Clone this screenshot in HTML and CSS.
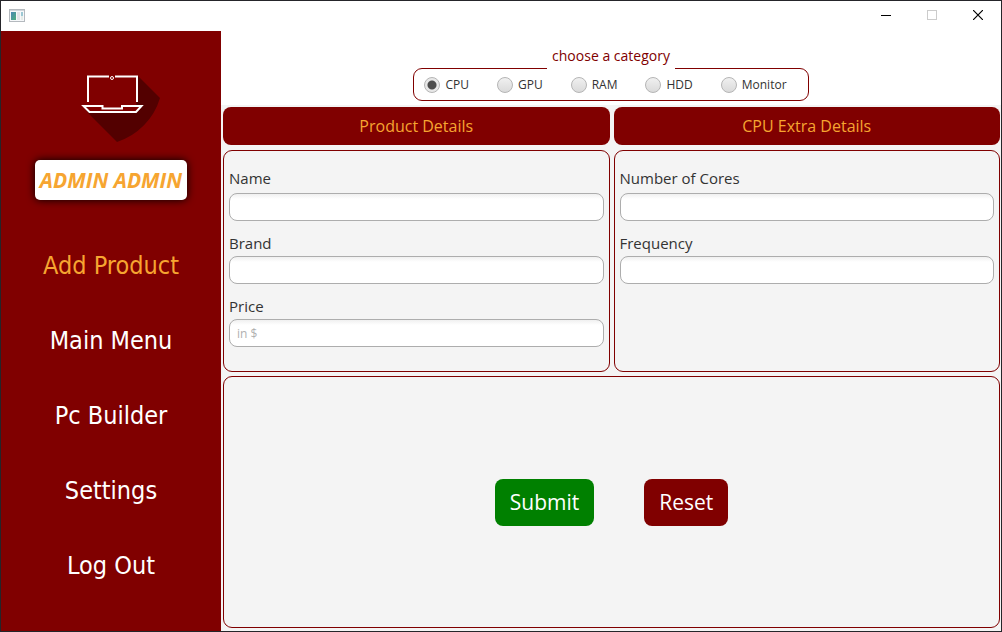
FILE: index.html
```html
<!DOCTYPE html>
<html lang="en">
<head>
<meta charset="utf-8">
<title>Add Product</title>
<link rel="stylesheet" href="styles.css">
</head>
<body>
<div class="window">
  <header class="titlebar">
    <svg class="app-icon" width="16" height="14" viewBox="0 0 16 14" aria-hidden="true">
      <defs>
        <linearGradient id="pane" x1="0" y1="0" x2="1" y2="1">
          <stop offset="0" stop-color="#4a86b4"/>
          <stop offset="1" stop-color="#4fae7c"/>
        </linearGradient>
      </defs>
      <rect x="0.5" y="0.5" width="15" height="12" fill="#f6f8fa" stroke="#b4b9be"/>
      <rect x="1" y="1" width="14" height="1" fill="#cfd5da"/>
      <rect x="2" y="3" width="5" height="8" fill="url(#pane)"/>
      <rect x="8" y="3" width="3" height="8" fill="#e2e4e8"/>
      <rect x="12" y="3" width="2" height="4" fill="#9cc8d4"/>
      <rect x="12" y="7" width="2" height="4" fill="#e6ece8"/>
    </svg>
    <div class="window-controls">
      <button class="window-button" type="button" aria-label="Minimize">
        <svg width="10" height="10" viewBox="0 0 10 10"><path d="M0 5.500H10" stroke="#000"/></svg>
      </button>
      <button class="window-button" type="button" aria-label="Maximize" disabled>
        <svg width="10" height="10" viewBox="0 0 10 10"><rect x=".5" y=".5" width="9" height="9" fill="none" stroke="#ccc"/></svg>
      </button>
      <button class="window-button" type="button" aria-label="Close">
        <svg width="10" height="10" viewBox="0 0 10 10"><path d="M0 0L10 10M10 0L0 10" stroke="#000" stroke-width="1.200"/></svg>
      </button>
    </div>
  </header>

  <div class="body">
    <aside class="sidebar">
      <svg class="logo" width="80" height="68" viewBox="0 0 80 68" role="img" aria-label="Laptop">
        <path d="M57 2L79 24A66 66 0 0 1 36 68L7 39L4 34H55Z" fill="#530000"/>
        <path d="M6 2H55V34H6Z" fill="#800000"/>
        <path d="M7 28V2.500H28M34 2.500H56V28" fill="none" stroke="#fff" stroke-width="2"/>
        <circle cx="31" cy="4" r="1.500" fill="#800000" stroke="#fff"/>
        <path d="M2.500 32H21.500V34.500H41V32H60.500L55 38H8.500Z" fill="#800000" stroke="#fff" stroke-width="2"/>
      </svg>
      <div class="user">ADMIN ADMIN</div>
      <nav class="menu">
        <a class="menu-item active" href="#add" aria-current="page">Add Product</a>
        <a class="menu-item" href="#main">Main Menu</a>
        <a class="menu-item" href="#builder">Pc Builder</a>
        <a class="menu-item" href="#settings">Settings</a>
        <a class="menu-item" href="#logout">Log Out</a>
      </nav>
    </aside>

    <form class="content">
      <div class="category-bar">
        <fieldset class="category">
          <legend>choose a category</legend>
          <div class="options">
            <label class="option"><input type="radio" name="category" checked>CPU</label>
            <label class="option"><input type="radio" name="category">GPU</label>
            <label class="option"><input type="radio" name="category">RAM</label>
            <label class="option"><input type="radio" name="category">HDD</label>
            <label class="option"><input type="radio" name="category">Monitor</label>
          </div>
        </fieldset>
      </div>

      <div class="main">
        <div class="columns">
          <section class="column">
            <h2 class="heading">Product Details</h2>
            <div class="panel fields">
              <div class="field lead"><label for="name">Name</label><input id="name" type="text"></div>
              <div class="field"><label for="brand">Brand</label><input id="brand" type="text"></div>
              <div class="field"><label for="price">Price</label><input id="price" type="text" placeholder="in $"></div>
            </div>
          </section>
          <section class="column">
            <h2 class="heading">CPU Extra Details</h2>
            <div class="panel fields">
              <div class="field lead"><label for="cores">Number of Cores</label><input id="cores" type="text"></div>
              <div class="field"><label for="frequency">Frequency</label><input id="frequency" type="text"></div>
            </div>
          </section>
        </div>
        <div class="panel actions">
          <button class="action submit" type="submit">Submit</button>
          <button class="action reset" type="reset">Reset</button>
        </div>
      </div>
    </form>
  </div>
</div>
</body>
</html>
```
FILE: styles.css
```css
* {
  box-sizing: border-box;
}

body {
  margin: 0;
  font-family: "Open Sans", "Noto Sans", sans-serif;
  color: #333;
}

.window {
  display: flex;
  flex-direction: column;
  min-height: 100vh;
  border: 1px solid #25252a;
  background: #fff;
}

.titlebar {
  display: flex;
  justify-content: space-between;
  align-items: center;
  height: 30px;
  padding-left: 8px;
}

.app-icon {
  display: block;
}

.window-controls {
  display: flex;
  align-self: flex-start;
}

.window-button {
  display: flex;
  align-items: center;
  justify-content: center;
  width: 46px;
  height: 28px;
  padding: 0;
  border: 0;
  background: none;
}

.body {
  display: flex;
  flex: 1;
}

.sidebar {
  display: flex;
  flex-direction: column;
  align-items: center;
  flex: none;
  width: 220px;
  padding-top: 43px;
  background: #800000;
}

.logo {
  display: block;
  margin-left: 20px;
}

.user {
  margin-top: 18px;
  padding: 0 5px;
  border-radius: 5px;
  background: #fff;
  box-shadow: 0 0 8px #000;
  color: #f6a531;
  font: italic bold 21px/40px "Open Sans", sans-serif;
}

.menu {
  display: flex;
  flex-direction: column;
  align-self: stretch;
  margin-top: 28px;
}

.menu-item {
  color: #fff;
  font: 25px/75px "DejaVu Sans Condensed", "DejaVu Sans", sans-serif;
  text-align: center;
  text-decoration: none;
}

.menu-item.active {
  color: #f6a531;
}

.content {
  display: flex;
  flex-direction: column;
  flex: 1;
}

.category-bar {
  display: flex;
  justify-content: center;
  padding: 14px 0 4px;
}

.category {
  margin: 0;
  padding: 0;
  border: 0;
}

.category legend {
  position: relative;
  z-index: 1;
  margin: 0 auto;
  padding: 0 5px 2px;
  background: #fff;
  color: #800000;
  font-size: 14px;
  line-height: 22px;
}

.options {
  display: flex;
  align-items: center;
  gap: 28px;
  height: 33px;
  margin-top: -1px;
  padding: 0 21px 0 10px;
  border: 1px solid #800000;
  border-radius: 9px;
}

.option {
  display: flex;
  align-items: center;
  gap: 5px;
  font-size: 12px;
  line-height: 16px;
}

.option input {
  appearance: none;
  width: 16px;
  height: 16px;
  margin: 0;
  border: 1px solid #b5b5b5;
  border-radius: 50%;
  background: linear-gradient(#f0f0f0, #dadada);
}

.option input:checked {
  background: radial-gradient(circle, #4d4d4d 4px, #e8e8e8 5px);
}

.main {
  display: flex;
  flex-direction: column;
  flex: 1;
  gap: 4px;
  padding: 2px 1px 3px 2px;
  background: #f4f4f4;
}

.columns {
  display: grid;
  grid-template-columns: 1fr 1fr;
  gap: 4px;
}

.column {
  display: flex;
  flex-direction: column;
  gap: 5px;
}

.heading {
  margin: 0;
  border-radius: 8px;
  background: #800000;
  color: #f6a531;
  font-size: 16px;
  font-weight: 400;
  line-height: 38px;
  text-align: center;
}

.panel {
  border: 1px solid #800000;
  border-radius: 9px;
}

.fields {
  display: flex;
  flex-direction: column;
  flex: 1;
  gap: 11px;
  padding: 16px 5px 24px;
}

.field {
  display: flex;
  flex-direction: column;
  gap: 2px;
}

.field.lead {
  gap: 4px;
}

.field label {
  font-size: 15px;
  line-height: 22px;
}

.field input {
  height: 28px;
  padding: 0 7px;
  border: 1px solid #adadad;
  border-radius: 8px;
  background: linear-gradient(#f0f0f0, #fff 5px);
  font-family: inherit;
  font-size: 12px;
}

.field input::placeholder {
  color: #b0b0b0;
}

.actions {
  display: flex;
  flex: 1;
  align-items: center;
  justify-content: center;
  gap: 50px;
}

.action {
  padding: 0 15px;
  border: 0;
  border-radius: 8px;
  color: #fff;
  font-family: inherit;
  font-size: 21px;
  line-height: 47px;
}

.submit {
  background: #008000;
}

.reset {
  background: #800000;
}
```
